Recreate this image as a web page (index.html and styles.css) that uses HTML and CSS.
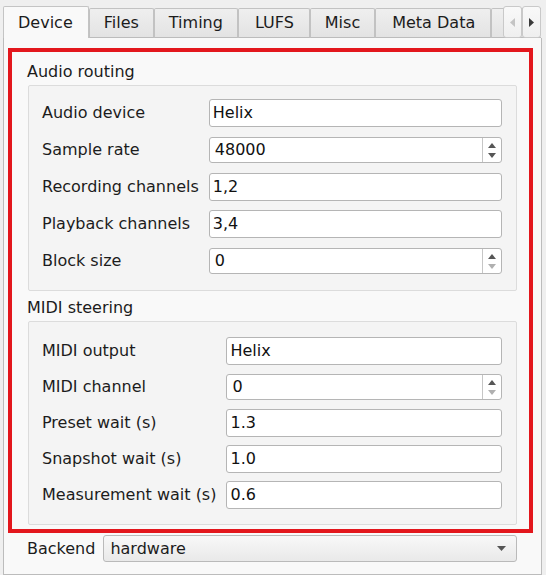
FILE: index.html
```html
<!DOCTYPE html>
<html>
<head>
<meta charset="utf-8">
<title>Settings</title>
<link rel="stylesheet" href="styles.css">
</head>
<body>
<div class="window">
  <div class="tabs-wrap">
    <div class="tabbar">
      <div class="tab selected">Device</div>
      <div class="tab">Files</div>
      <div class="tab">Timing</div>
      <div class="tab wide">LUFS</div>
      <div class="tab">Misc</div>
      <div class="tab wide">Meta Data</div>
      <div class="tab stub" aria-hidden="true"></div>
    </div>
    <div class="scrollers">
      <div class="scroll-btn disabled">
        <svg width="5" height="9" viewBox="0 0 5 9"><polygon points="5,0 5,9 0,4.5" /></svg>
      </div>
      <div class="scroll-btn">
        <svg width="5" height="9" viewBox="0 0 5 9"><polygon points="0,0 0,9 5,4.5" /></svg>
      </div>
    </div>
  </div>
  <div class="pane">
    <div class="highlight">
      <div class="group-title">Audio routing</div>
      <div class="group first">
        <div class="form wide-gap">
          <div class="label">Audio device</div>
          <div class="field"><span class="value">Helix</span></div>
          <div class="label">Sample rate</div>
          <div class="field spin"><span class="value">48000</span>
            <span class="spin-btns">
              <svg width="8" height="5" viewBox="0 0 8 5"><polygon points="0,5 8,5 4,0" /></svg>
              <svg width="8" height="5" viewBox="0 0 8 5"><polygon points="0,0 8,0 4,5" /></svg>
            </span>
          </div>
          <div class="label">Recording channels</div>
          <div class="field"><span class="value">1,2</span></div>
          <div class="label">Playback channels</div>
          <div class="field"><span class="value">3,4</span></div>
          <div class="label">Block size</div>
          <div class="field spin"><span class="value">0</span>
            <span class="spin-btns">
              <svg width="8" height="5" viewBox="0 0 8 5"><polygon points="0,5 8,5 4,0" /></svg>
              <svg class="off" width="8" height="5" viewBox="0 0 8 5"><polygon points="0,0 8,0 4,5" /></svg>
            </span>
          </div>
        </div>
      </div>
      <div class="group-title second">MIDI steering</div>
      <div class="group">
        <div class="form">
          <div class="label">MIDI output</div>
          <div class="field"><span class="value">Helix</span></div>
          <div class="label">MIDI channel</div>
          <div class="field spin"><span class="value">0</span>
            <span class="spin-btns">
              <svg width="8" height="5" viewBox="0 0 8 5"><polygon points="0,5 8,5 4,0" /></svg>
              <svg class="off" width="8" height="5" viewBox="0 0 8 5"><polygon points="0,0 8,0 4,5" /></svg>
            </span>
          </div>
          <div class="label">Preset wait (s)</div>
          <div class="field"><span class="value">1.3</span></div>
          <div class="label">Snapshot wait (s)</div>
          <div class="field"><span class="value">1.0</span></div>
          <div class="label">Measurement wait (s)</div>
          <div class="field"><span class="value">0.6</span></div>
        </div>
      </div>
    </div>
    <div class="backend-row">
      <div class="label">Backend</div>
      <div class="combo">
        <span class="value">hardware</span>
        <svg width="9" height="5" viewBox="0 0 9 5"><polygon points="0,0 9,0 4.5,5" /></svg>
      </div>
    </div>
  </div>
</div>
</body>
</html>
```
FILE: styles.css
```css
html, body {
  margin: 0;
  padding: 0;
  height: 100%;
  overflow: hidden;
}

body {
  background: #efefef;
  font-family: "DejaVu Sans", "Noto Sans", sans-serif;
  font-size: 16px;
  color: #1c1c1c;
}

.window {
  width: 546px;
  height: 575px;
  display: flex;
  flex-direction: column;
}

.tabs-wrap {
  position: relative;
  margin-left: 3px;
  width: 538px;
  height: 38px;
  flex-shrink: 0;
}

.tabbar {
  display: flex;
  align-items: flex-end;
  height: 38px;
  overflow: hidden;
}

.tab {
  flex-shrink: 0;
  box-sizing: border-box;
  height: 30px;
  padding: 0 14px 1px;
  display: flex;
  align-items: center;
  border: 1px solid #c2c2c2;
  border-radius: 2px 2px 0 0;
  border-bottom-color: #bcbcbc;
  background: linear-gradient(#efefef, #e3e3e3);
  line-height: 1;
}

.tab.wide {
  padding: 0 15px 1px 16px;
}

.tab.stub {
  width: 60px;
}

.tab.selected {
  height: 32px;
  padding: 0 15px 0 14px;
  border-bottom: none;
  background: #f9f9f9;
  border-color: #c4c4c4;
}

.scrollers {
  position: absolute;
  left: 500px;
  top: 6px;
  display: flex;
  height: 32px;
}

.scroll-btn {
  box-sizing: border-box;
  width: 19px;
  height: 32px;
  border: 1px solid #c9c9c9;
  border-radius: 3px;
  background: linear-gradient(#f9f9f9, #efefef);
  display: flex;
  align-items: center;
  justify-content: center;
  fill: #3a3a3a;
}

.scroll-btn.disabled {
  fill: #c4c4c4;
}

.pane {
  flex: 1;
  margin: 0 4px 0 3px;
  border: 1px solid #bcbcbc;
  border-top: none;
  background: #f9f9f9;
}

.highlight {
  margin: 10px 8px 0 4px;
  border: 4px solid #e3171d;
  padding: 10px 12px 4px 16px;
}

.group-title {
  line-height: 20px;
  margin: 0 0 3px -1px;
}

.group-title.second {
  margin-top: 7px;
}

.group {
  border: 1px solid #dcdcdc;
  border-radius: 2px;
  background: #f4f4f4;
  padding: 15px 14px 15px 13px;
}

.group.first {
  padding-top: 13px;
}

.form {
  display: grid;
  grid-template-columns: max-content 1fr;
  column-gap: 10px;
  row-gap: 8px;
  align-items: center;
}

.form.wide-gap {
  row-gap: 9px;
}

.label {
  white-space: nowrap;
  line-height: 20px;
}

.field {
  box-sizing: border-box;
  height: 28px;
  border: 1px solid #b5b5b5;
  border-radius: 3px;
  background: #ffffff;
  display: flex;
  align-items: center;
  padding-left: 3px;
  color: #111111;
}

.field .value {
  flex: 1;
  line-height: 20px;
}

.field.spin {
  height: 26px;
  margin: 1px 0;
  padding-left: 5px;
}

.spin-btns {
  align-self: stretch;
  width: 18px;
  border-left: 1px solid #c6c6c6;
  display: flex;
  flex-direction: column;
  align-items: center;
  justify-content: center;
  gap: 5px;
  fill: #565656;
}

.spin-btns .off {
  fill: #b0b0b0;
}

.backend-row {
  display: flex;
  align-items: center;
  gap: 8px;
  margin: 2px 24px 0 23px;
}

.combo {
  flex: 1;
  box-sizing: border-box;
  height: 27px;
  border: 1px solid #bababa;
  border-radius: 3px;
  background: linear-gradient(#f8f8f8, #e9e9e9);
  display: flex;
  align-items: center;
  padding: 0 10px 0 6px;
  fill: #555555;
}

.combo .value {
  flex: 1;
  line-height: 20px;
}
```
